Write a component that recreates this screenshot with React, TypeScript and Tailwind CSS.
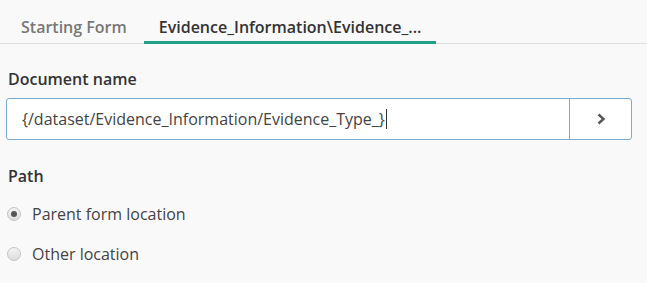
import { useState } from "react";

export default function App() {
  const [path, setPath] = useState("parent");

  return (
    <div className="w-[647px] h-[283px] bg-[#f9f9f9] overflow-hidden" style={{ fontFamily: '"Open Sans", sans-serif' }}>
      <div className="flex border-b border-[#dedede] h-[44px] px-[6px]">
        <button className="px-[15px] pt-[13px] text-[16px] font-semibold text-[#777] border-b-[3px] border-transparent -mb-px leading-[22px]">
          Starting Form
        </button>
        <button className="ml-[2px] px-[15px] pt-[13px] text-[16px] font-semibold text-[#333] border-b-[3px] border-[#22a086] -mb-px leading-[22px]">
          Evidence_Information\Evidence_...
        </button>
      </div>

      <div className="px-[6px]">
        <div className="mt-[24px] pl-[2px] text-[16px] font-semibold text-[#333] leading-[22px]">Document name</div>
        <div className="mt-[8px] flex h-[42px] border border-[#7eaacc] rounded-[3px] bg-white w-[626px]">
          <div className="flex-1 flex items-center pl-[15px] text-[16px] text-[#444]">
            {"{/dataset/Evidence_Information/Evidence_Type_}"}
            <span className="ml-px w-px h-[20px] bg-[#333]" />
          </div>
          <button className="w-[62px] border-l border-[#7eaacc] flex items-center justify-center">
            <svg width="10" height="12" viewBox="0 0 10 12">
              <path d="M2.5 1.5 L7.5 6 L2.5 10.5" fill="none" stroke="#555" strokeWidth="2.4" />
            </svg>
          </button>
        </div>

        <div className="mt-[25px] pl-[2px] text-[16px] font-semibold text-[#333] leading-[22px]">Path</div>
        <div className="mt-[16px] flex flex-col gap-[18px]">
          {[
            { id: "parent", label: "Parent form location" },
            { id: "other", label: "Other location" },
          ].map((o) => (
            <label key={o.id} className="flex items-center h-[22px] cursor-pointer" onClick={() => setPath(o.id)}>
              <span className="ml-px w-[14px] h-[14px] rounded-full border border-[#c4c4c4] bg-gradient-to-b from-[#f4f4f4] to-[#dcdcdc] flex items-center justify-center">
                {path === o.id && <span className="w-[6px] h-[6px] rounded-full bg-[#555]" />}
              </span>
              <span className="ml-[11px] text-[16px] text-[#444]">{o.label}</span>
            </label>
          ))}
        </div>
      </div>
    </div>
  );
}
